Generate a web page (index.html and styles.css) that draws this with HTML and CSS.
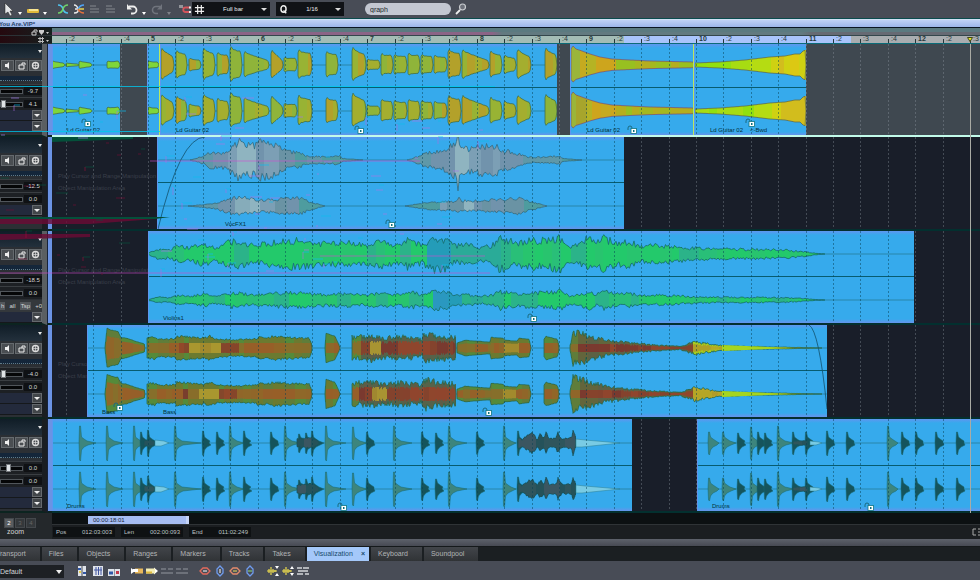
FILE: index.html
```html
<!DOCTYPE html>
<html lang="en">
<head>
<meta charset="utf-8">
<title>You Are.VIP*</title>
<link rel="stylesheet" href="styles.css">
</head>
<body>
<header class="toolbar">
  <div class="group">
    <button class="tool wide" aria-label="Pointer"><svg viewBox="0 0 16 16"><path d="M5 2v11l3-2 2 4 2-1-2-4h3z" fill="#e4e6e8" stroke="#222" stroke-width=".5"/></svg></button>
    <button class="drop" aria-label="Pointer modes"></button>
    <button class="tool wide" aria-label="Draw"><svg viewBox="0 0 16 16"><rect x="2" y="8" width="12" height="4" rx="1" fill="#e0b83a"/><path d="M4 9h9" stroke="#fff3b0" stroke-width="1.5"/></svg></button>
    <button class="drop" aria-label="Draw modes"></button>
  </div>
  <div class="group spaced">
    <button class="tool" aria-label="Crossfade"><svg viewBox="0 0 12 12"><path d="M1 2q4 0 5 4t5 4" stroke="#4fc3ee" stroke-width="1.6" fill="none"/><path d="M1 10q4 0 5-4t5-4" stroke="#6fd26a" stroke-width="1.6" fill="none"/></svg></button>
    <button class="tool" aria-label="Crossfade editor"><svg viewBox="0 0 12 12"><path d="M1 2q3 0 4 4t-4 4M2 6h3" stroke="#e8e8e8" stroke-width="1.5" fill="none"/><path d="M5 6q2-4 6-4" stroke="#4fa3f5" stroke-width="1.6" fill="none"/><path d="M5 6q2 4 6 4" stroke="#e3703c" stroke-width="1.6" fill="none"/><path d="M6 6h5" stroke="#e9d552" stroke-width="1.5"/></svg></button>
    <button class="tool dim" aria-label="Align left"><svg viewBox="0 0 12 12"><path d="M1 3h6M1 6h9M1 9h9" stroke="#8b8f97" stroke-width="1.6"/></svg></button>
    <button class="tool dim" aria-label="Align right"><svg viewBox="0 0 12 12"><path d="M1 3h6M1 6h9M1 9h9" stroke="#8b8f97" stroke-width="1.6"/></svg></button>
  </div>
  <div class="group spaced">
    <button class="tool" aria-label="Undo"><svg viewBox="0 0 12 12"><path d="M3 3.500h4a3.500 3.500 0 0 1 0 7H5" stroke="#eee" stroke-width="1.800" fill="none"/><path d="M1 1v5.500h5z" fill="#eee"/></svg></button>
    <button class="drop" aria-label="Undo history"></button>
    <button class="tool dim" aria-label="Redo"><svg viewBox="0 0 12 12"><path d="M9 3.500H5a3.500 3.500 0 0 0 0 7h2" stroke="#8b8f97" stroke-width="1.600" fill="none"/><path d="M11 1v5.500H6z" fill="#8b8f97"/></svg></button>
    <button class="drop dim" aria-label="Redo history"></button>
  </div>
  <div class="group snap">
    <button class="tool" aria-label="Snap"><svg viewBox="0 0 12 12"><path d="M11 4.500H6.500a2 2 0 0 0 0 4.500H11" stroke="#d2545c" stroke-width="1.800" fill="none"/><path d="M10 4.500h2M10 9h2" stroke="#eee" stroke-width="1.800"/><path d="M1 2v3M3 2v3" stroke="#ddd"/></svg></button>
  </div>
  <div class="pick"><label for="grid"><svg viewBox="0 0 12 12"><path d="M4 1v10M8 1v10M1 4h10M1 8h10" stroke="#eee" stroke-width="1.300"/></svg></label>
    <select id="grid" aria-label="Grid"><option>Full bar</option></select></div>
  <div class="pick quant"><label for="quant"><svg viewBox="0 0 12 12"><ellipse cx="6" cy="5.500" rx="2.800" ry="3.500" fill="none" stroke="#eee" stroke-width="1.600"/><path d="M6 7l3 3" stroke="#eee" stroke-width="1.500"/></svg></label>
    <select id="quant" aria-label="Quantize"><option>1/16</option></select></div>
  <input class="search" type="search" value="graph" aria-label="Search">
  <button class="tool find" aria-label="Find"><svg viewBox="0 0 12 12"><path d="M1 11l4-4" stroke="#eee" stroke-width="1.800"/><circle cx="7.500" cy="4" r="3" fill="#6d717a" stroke="#c9ccd0" stroke-width="1.200"/></svg></button>
</header>

<h1 class="title">You Are.VIP*</h1>

<section class="ruler">
  <div class="corner">
    <div class="corner-row"><svg viewBox="0 0 18 8"><path d="M1 4h4v3H1zM3 4V2h3v2" fill="none" stroke="#ccc"/><path d="M8 2h5v2l-2.500 3L8 4z" fill="#ccc"/><path d="M15 4h3l-1.500 2z" fill="#ccc"/></svg></div>
    <div class="corner-row"><svg viewBox="0 0 18 8"><path d="M9 1v6M11.500 1v6M7 2.500h6M7 5.500h6" stroke="#bbb"/><path d="M15 4h3l-1.500 2z" fill="#ccc"/></svg></div>
  </div>
  <div class="scale">
    <div class="markers"></div>
    <div class="beats" id="beats"></div>
  </div>
</section>

<main class="tracks" id="tracks"></main>

<section class="status">
  <div class="zoom">
    <div class="zoom-set"><button class="on">2</button><button>3</button><button>4</button></div>
    <span>zoom</span>
  </div>
  <div class="status-main">
    <div class="scroll" id="scroll"></div>
    <div class="readout">
      <dl class="times">
        <div><dt>Pos</dt><dd>012:03:003</dd></div>
        <div><dt>Len</dt><dd>002:00:093</dd></div>
        <div><dt>End</dt><dd>011:02:249</dd></div>
      </dl>
      <svg class="corner-icon" viewBox="0 0 8 8"><path d="M4 1H1v6h3M6 1h2M6 7h2M6 4h2" fill="none" stroke="#aaa"/></svg>
    </div>
  </div>
</section>

<div class="splitter"></div>

<nav class="tabs">
  <a href="#transport">Transport</a><a href="#files">Files</a><a href="#objects">Objects</a><a href="#ranges">Ranges</a><a href="#markers">Markers</a><a href="#tracks">Tracks</a><a href="#takes">Takes</a><a href="#vis" class="active">Visualization<b>×</b></a><a href="#keyboard">Keyboard</a><a href="#soundpool">Soundpool</a>
</nav>

<footer class="toolbar bottom">
  <div class="preset"><select aria-label="Preset"><option>Default</option></select></div>
  <div class="group">
    <button class="tool" aria-label="Split view"><svg viewBox="0 0 12 12"><rect x="2" y="1" width="3.500" height="10" fill="#dfe3ea"/><rect x="6.500" y="1" width="3.500" height="10" fill="#dfe3ea"/><path d="M2 4h3M7 8h3" stroke="#3158a8" stroke-width="2"/><path d="M3 7h2" stroke="#e8cf4a" stroke-width="2"/></svg></button>
    <button class="tool" aria-label="Grid view"><svg viewBox="0 0 12 12"><rect x="1.500" y="1.500" width="9" height="9" fill="#dfe3ea" stroke="#dfe3ea"/><path d="M4 2v8M6.500 2v8M9 2v8M2 5h8" stroke="#4154a0"/></svg></button>
    <button class="tool" aria-label="Paired view"><svg viewBox="0 0 12 12"><rect x="0" y="4" width="6" height="7" fill="#dfe3ea"/><rect x="6.500" y="4" width="5.500" height="7" fill="#dfe3ea"/><path d="M1 8h4" stroke="#3158a8" stroke-width="3"/><path d="M8 7.500h3" stroke="#c4384b" stroke-width="3"/></svg></button>
  </div>
  <div class="group spaced">
    <button class="tool" aria-label="Move start"><svg viewBox="0 0 12 12"><path d="M0 3l4 3-4 3z" fill="#fff"/><rect x="4" y="3.500" width="8" height="5" fill="#e8b75a"/><path d="M2 5.500h5" stroke="#fff" stroke-width="3"/></svg></button>
    <button class="tool" aria-label="Move end"><svg viewBox="0 0 12 12"><path d="M8 2.500l4 3.500-4 3.500z" fill="#fff"/><rect x="0" y="3.500" width="9" height="5" fill="#f3edb5"/><path d="M0 7.500h6" stroke="#e0b83a" stroke-width="2"/></svg></button>
    <button class="tool dim" aria-label="Trim"><svg viewBox="0 0 12 12"><path d="M0 4h5M7 4h5M0 8h12" stroke="#868a92" stroke-width="2"/></svg></button>
    <button class="tool dim" aria-label="Extend"><svg viewBox="0 0 12 12"><path d="M0 4h5M7 4h5M0 8h12" stroke="#868a92" stroke-width="2"/></svg></button>
  </div>
  <div class="group spaced">
    <button class="tool" aria-label="Zoom out horizontally"><svg viewBox="0 0 12 12"><path d="M1 6l3-3h4l3 3-3 3H4z" fill="none" stroke="#e36a5c" stroke-width="1.300"/><path d="M4 6h4" stroke="#fff"/></svg></button>
    <button class="tool" aria-label="Zoom in vertically"><svg viewBox="0 0 12 12"><path d="M6 1l3 3v4l-3 3-3-3V4z" fill="none" stroke="#6f9cf0" stroke-width="1.300"/><path d="M6 4v4" stroke="#fff"/></svg></button>
    <button class="tool" aria-label="Zoom in horizontally"><svg viewBox="0 0 12 12"><path d="M1 6l3-3h4l3 3-3 3H4z" fill="none" stroke="#e38a6c" stroke-width="1.300"/><path d="M4 6h4" stroke="#f1dc5a"/></svg></button>
    <button class="tool" aria-label="Zoom out vertically"><svg viewBox="0 0 12 12"><path d="M6 1l3 3v4l-3 3-3-3V4z" fill="none" stroke="#6f9cf0" stroke-width="1.300"/><path d="M4 6h4" stroke="#8fe07a"/></svg></button>
  </div>
  <div class="group spaced">
    <button class="tool" aria-label="Wave zoom in"><svg viewBox="0 0 12 12"><path d="M0 6h10M2 4v4M4 2v8M6 4v4M8 5v2" stroke="#ead94e" stroke-width="1.200"/><path d="M8 1h4l-2 3zM8 11h4l-2-3z" fill="#fff"/></svg></button>
    <button class="tool" aria-label="Wave zoom out"><svg viewBox="0 0 12 12"><path d="M0 6h10M2 4v4M4 2v8M6 4v4M8 5v2" stroke="#ead94e" stroke-width="1.200"/><path d="M8 4h4l-2-3zM8 8h4l-2 3z" fill="#fff"/></svg></button>
    <button class="tool" aria-label="Lines"><svg viewBox="0 0 12 12"><path d="M0 3h5M6 3h6M1 6h10M0 9h6M8 9h4" stroke="#d4d6da" stroke-width="1.300"/></svg></button>
  </div>
</footer>
<script src="app.js"></script>
</body>
</html>
```

FILE: styles.css
```css
* { box-sizing: border-box; }
body {
  margin: 0;
  min-height: 100vh;
  overflow: hidden;
  display: flex;
  flex-direction: column;
  background: #484c56;
  color: #d4d6d8;
  font: 6px/8px "Liberation Sans", Arial, sans-serif;
}
button, select, input { font: inherit; color: inherit; margin: 0; padding: 0; border: 0; background: none; }
select { appearance: none; }
svg { display: block; }

.toolbar { display: flex; align-items: center; height: 19px; background: #484c56; border-bottom: 1px solid #0b4b4c; }
.group { display: flex; align-items: center; gap: 4px; }
.group.spaced { margin-left: 9px; }
.group.snap { margin-left: 7px; }
.toolbar > .group:first-child { gap: 2px; }
.tool { width: 12px; height: 12px; flex: none; }
.tool svg { width: 100%; height: 100%; }
.tool.wide { width: 16px; height: 16px; }
.tool.dim { opacity: .6; }
.drop { width: 5px; height: 12px; display: flex; align-items: flex-end; }
.drop::after { content: ""; border: 2px solid transparent; border-top: 3px solid #fff; border-bottom: 0; }
.drop.dim { opacity: .3; }
.pick { position: relative; display: flex; align-items: center; width: 78px; height: 14px; margin-left: 1px; background: #101216; color: #eee; }
.pick.quant { width: 68px; margin-left: 6px; }
.pick label svg { width: 11px; height: 11px; margin-left: 2px; }
.pick select { flex: 1; height: 100%; text-align: center; text-align-last: center; }
.pick::after { content: ""; margin-right: 3px; border: 3px solid transparent; border-top: 3px solid #ddd; border-bottom: 0; }
.search { appearance: none; width: 86px; height: 12px; margin-left: 21px; padding: 0 5px; border-radius: 6px; background: #c3c7d1; color: #20242a; font-size: 7px; }
.find { margin-left: 4px; }

.title { margin: 0; height: 8px; font: bold 6px/8px "Liberation Sans", Arial, sans-serif; color: #26406a; background: linear-gradient(#c0d2f6, #9db6ea); border-top: 1px solid #cfe0f4; text-indent: -1px; }

.ruler { display: flex; height: 17px; border-top: 1px solid #0a1622; }
.corner { width: 52px; flex: none; background: #14181c; }
.corner-row { height: 8px; display: flex; justify-content: flex-end; padding-right: 3px; border-bottom: 1px solid #2b3236; background: linear-gradient(90deg, #25090f, #16201f); }
.corner-row svg { width: 18px; height: 8px; }
.scale { flex: 1; min-width: 0; overflow: hidden; }
.markers { height: 7px; background: linear-gradient(90deg, #8b6486 0 440px, #627a80 450px 750px, #666a73 760px); border-top: 4px solid #5b7a80; }
.beats { position: relative; height: 9px; overflow: hidden; background: linear-gradient(90deg, #a3bcb5 0 572px, #a9c4fb 572px 799px, #a9adb0 799px); border-top: 1px solid #34474c; border-bottom: 1px solid #0b6c78; }
.beat { position: absolute; bottom: 0; height: 8px; padding-left: 3px; font-size: 7px; line-height: 8px; color: #26383a; }
.beat::before { content: ""; position: absolute; left: 0; bottom: 0; height: 4px; border-left: 1px solid #27363a; }
.beat.bar { font-weight: bold; }
.cursor-head { position: absolute; bottom: 1px; width: 6px; height: 5px; }

.tracks { position: relative; overflow: hidden; }
.track { display: flex; height: 94px; }
.track.selected { height: 93px; }
.panel { width: 47px; flex: none; overflow: hidden; background: #2b2f34; border-right: 5px solid #1a1e22; border-bottom: 2px solid #0c2420; }
.panel.lit { border-right-color: #5a5f62; }
.panel-head { height: 16px; display: flex; align-items: center; justify-content: flex-end; background: linear-gradient(#101d27, #23303c); }
.selected .panel-head { height: 14px; }
.panel-head::after { content: ""; border: 2px solid transparent; border-top: 3px solid #e8e8e8; border-bottom: 0; }
.keys { display: flex; gap: 1px; height: 14px; align-items: center; justify-content: flex-end; }
.key { width: 13px; height: 11px; flex: none; background: #4a4e52; border: 1px solid #656a6e; }
.key svg { width: 11px; height: 9px; }
.meter { height: 12px; padding-top: 4px; }
.meter i { display: block; height: 5px; background: #14263a; border-bottom: 1px dotted #5f7a88; }
.fader { height: 13px; display: flex; align-items: center; background: #1d2024; border-top: 1px solid #3a3e42; }
.fader input { appearance: none; width: 23px; height: 5px; flex: none; background: #050607; border: 1px solid #50555a; }
.fader input::-webkit-slider-thumb { appearance: none; width: 5px; height: 8px; background: #dfe3e6; border: 1px solid #74787c; }
.fader input.rest::-webkit-slider-thumb { opacity: 0; }
.fader output { flex: 1; text-align: center; background: #0f1114; margin-left: 1px; }
.slot { height: 11px; display: flex; align-items: center; border-bottom: 1px solid #15181b; background: #232a3c; }
.slot select { flex: 1; min-width: 0; height: 100%; }
.slot span { width: 10px; height: 10px; padding: 3px 1px; background: #42464a; border: 1px solid #65696d; }
.slot span::after { content: ""; display: block; width: 0; border: 3px solid transparent; border-top: 3px solid #eee; border-bottom: 0; }
.mini { display: flex; justify-content: space-between; height: 12px; align-items: center; background: #34383c; margin-top: 1px; }
.mini b { font-weight: normal; background: #54585c; padding: 0 1px; }
.rail { width: 5px; flex: none; background: #6b93e4; border-left: 1px solid #152238; border-bottom: 2px solid #0c2420; }
.lane { position: relative; flex: 1; min-width: 0; overflow: hidden; background: #191e29; border-bottom: 2px solid #03302f; }
.selected .lane { background: #3f4850; border-bottom-color: #c2fbea; }
.hint { position: absolute; left: 6px; top: 33px; font-size: 6px; line-height: 12px; white-space: pre; color: #3a3f4a; }
.grid, .wave { position: absolute; left: 0; top: 0; width: 100%; height: 100%; }
.clip { position: absolute; top: 0; bottom: 0; overflow: hidden; background: linear-gradient(#5f96f0, #36aaec 4px 88px, #6793ec); border-left: 1px solid #5f96ee; }
.clip-name { position: absolute; bottom: 1px; white-space: pre; color: #05303a; }
.lock { position: absolute; width: 10px; height: 9px; }
.glitch { position: absolute; left: 0; top: 0; width: 500px; height: 280px; pointer-events: none; }
.playhead { position: absolute; top: 0; bottom: 0; width: 1px; background: #a9aba4; }

.status { display: flex; height: 26px; background: #1b1e21; }
.zoom { width: 52px; flex: none; padding-top: 5px; background: #24282b; }
.zoom-set { display: flex; gap: 1px; padding-left: 4px; }
.zoom-set button { width: 10px; height: 10px; background: #34383b; border: 1px solid #44484c; color: #666; }
.zoom-set .on { background: #595d60; color: #fff; }
.zoom span { padding-left: 7px; font-size: 7px; }
.status-main { flex: 1; min-width: 0; }
.scroll { position: relative; height: 12px; background: #0c1012; border-bottom: 1px solid #2f3336; }
.thumb { position: absolute; top: 3px; height: 8px; line-height: 8px; padding-left: 5px; background: #a6bdf2; border-right: 3px solid #c5d4f7; color: #18243c; }
.readout { display: flex; align-items: center; padding: 2px 0; }
.times { display: flex; gap: 6px; margin: 0; padding: 0 1px; }
.times > div { display: flex; justify-content: space-between; width: 62px; padding: 1px 3px; background: #0e1113; color: #bfc2c4; }
.times dd { margin: 0; }
.corner-icon { width: 8px; height: 8px; margin-left: auto; }
.splitter { height: 8px; background: linear-gradient(#5d616b, #474a53); border-bottom: 1px solid #15191b; }

.tabs { display: flex; gap: 2px; height: 14px; background: #1b1f22; }
.tabs a { padding: 0 14px 0 7px; line-height: 14px; font-size: 7px; color: #b2b4b6; text-decoration: none; background: linear-gradient(#42454a, #303336); }
.tabs a:first-child { margin-left: -11px; }
.tabs .active { padding-right: 4px; background: #a4c8fa; color: #164a6c; }
.tabs b { margin-left: 8px; }
.bottom { border: 0; flex: 1; align-items: flex-start; padding-top: 4px; }
.preset { display: flex; align-items: center; width: 64px; height: 13px; margin-right: 12px; background: #1d2024; font-size: 7px; }
.preset select { flex: 1; min-width: 0; height: 100%; }
.preset::after { content: ""; margin-right: 2px; border: 3px solid transparent; border-top: 4px solid #eee; border-bottom: 0; }
.bottom .group { gap: 3px; }
.bottom .preset + .group { gap: 4px; }
.bottom .spaced { margin-left: 11px; }
```

FILE: app.js
```js
// Timeline coordinates are window pixels; ORIGIN is where the lanes begin.
const ORIGIN = 52, BEAT = 27.4, BAR5 = 148, LOCATOR = 970;
const WIDTH = document.documentElement.clientWidth;
let seed = 7;
const rnd = () => (seed = (seed * 16807) % 2147483647) / 2147483647;
const NS = "http://www.w3.org/2000/svg";
function el(tag, cls, parent, text) {
  const n = document.createElement(tag);
  if (cls) n.className = cls;
  if (text) n.textContent = text;
  parent.append(n);
  return n;
}
function svg(cls, parent, body) {
  const n = document.createElementNS(NS, "svg");
  n.setAttribute("class", cls);
  n.innerHTML = body;
  parent.append(n);
  return n;
}
function grid(left, color) {
  let s = "";
  for (let i = -3; BAR5 + i * BEAT < WIDTH; i++) {
    const x = Math.round(BAR5 + i * BEAT) - left + 0.5;
    s += `<path d="M${x} 0V94" stroke="${color}" stroke-dasharray="2 2"/>`;
  }
  return s;
}
// Height at x from a flat list of x,height pairs.
function level(p, x) {
  for (let i = 0; i < p.length - 2; i += 2)
    if (x >= p[i] && x <= p[i + 2])
      return p[i + 1] + (p[i + 3] - p[i + 1]) * (x - p[i]) / (p[i + 2] - p[i] || 1);
  return 0;
}
// Draws a filled, colour-banded envelope around the line y.
function wave(p, y, left, o) {
  const up = [], down = [], bands = {}, cores = {};
  const end = p[p.length - 2];
  let run = 0, c = "", core = "";
  const step = o.step || 1;
  const at = (x) => {
    const h = level(p, x) * (o.scale || 1), n = o.noise || 0;
    return [h * (1 - n * rnd()), h * (1 - n * rnd()) * (o.low || 1)];
  };
  let prev = at(p[0]);
  for (let x = p[0]; x < end; x += step) {
    const nx = Math.min(end, x + step), cur = at(nx);
    if (run-- <= 0) {
      run = 3 + rnd() * 7;
      const list = o.by ? o.by(x) : o.colors;
      c = list[Math.floor(rnd() * list.length)];
      if (o.coreBy) {
        const cl = o.coreBy(x);
        core = cl[Math.floor(rnd() * cl.length)];
      }
    }
    const a = x - left, b = nx - left;
    bands[c] = (bands[c] || "") + `M${a} ${y - prev[0]}L${b} ${y - cur[0]}V${y + cur[1]}L${a} ${y + prev[1]}z`;
    if (o.core) {
      const k = Math.min(o.core, prev[0] * .6);
      cores[core] = (cores[core] || "") + `M${a} ${y - k}H${b}V${y + k}H${a}z`;
    }
    up.push(`${a} ${(y - prev[0]).toFixed(1)}`);
    down.unshift(`${a} ${(y + prev[1]).toFixed(1)}`);
    prev = cur;
  }
  let s = "";
  for (const k in bands) s += `<path d="${bands[k]}" fill="${k}" shape-rendering="crispEdges"/>`;
  for (const k in cores) s += `<path d="${cores[k]}" fill="${k}" opacity=".9"/>`;
  return s + `<path d="M${up.join("L")}L${end - left} ${y}L${down.join("L")}z" fill="none" stroke="${o.line || "#21715f"}" stroke-width=".8"/>`;
}

// Plucks: start, end, attack height, release height.
const plucks = [52,65,4,2, 66,79,2,1, 79,92,4,2, 107,120,4,4, 148,159,4,3,
  161,174,17,9, 176,187,15,11, 189,201,7,5, 203,215,17,12, 217,229,13,10, 230,242,19,14,
  244,269,14,5, 271,283,15,6, 284,297,8,7, 298,312,16,12, 326,338,14,11, 352,366,18,11,
  367,380,6,5, 381,393,12,10, 394,407,11,9, 408,420,12,10, 421,433,11,9, 434,447,10,8,
  448,461,16,12, 462,489,16,5, 490,502,14,10, 504,516,10,7, 517,531,16,9, 545,557,17,11];
const lime = ["#8fb43a", "#a4ae2f", "#98b334", "#b3a12a"];
function guitar(y, left) {
  let s = "";
  for (let i = 0; i < plucks.length; i += 4) {
    const [a, b, h, k] = plucks.slice(i, i + 4);
    s += wave([a, h * .8, a + 1, h, a + 3, h * .85, (a + b) / 2 + 1, (h * .8 + k) / 2, b - 2, k, b, k * .5], y, left,
      { colors: a < 150 ? ["#7fd63a"] : lime, low: .88, noise: .06, line: "#43704a" });
  }
  s += wave([571, 16, 573, 19, 576, 16, 582, 14, 590, 11, 600, 8, 612, 6, 630, 5, 650, 4, 694, 3], y, left,
    { by: x => x < 578 ? ["#9ab53a", "#a7a52c"] : x < 590 ? ["#b5b324", "#c5aa20"] : x < 615 ? ["#cda51d", "#c5aa20"] : ["#a5b81e", "#b5ae1e", "#98c020"], line: "#7c5a70", low: .9 });
  s += wave([695, 2, 720, 3, 745, 5, 770, 8, 785, 9, 795, 11, 800, 11, 803, 14, 806, 15], y, left,
    { by: x => x < 750 ? ["#92e00f", "#a7dc12"] : x < 770 ? ["#b5dc12", "#cfd112"] : ["#cfd112", "#dcc813", "#d2bd1d"], line: "#63704d" });
  return s;
}
const voc1 = [190,0,205,5,210,10,222,9,228,13,232,17,238,22,240,26,243,18,258,19,260,23,270,20,280,17,288,10,300,9,306,5,318,4,340,5,342,2,363,0];
const voc2 = [407,0,420,5,430,10,440,10,448,14,451,22,455,18,457,19,458,31,460,19,463,21,468,14,480,17,498,18,502,12,515,9,525,5,533,3,560,5,562,2,582,0];
const voc3 = [188,0,205,2,218,4,230,9,240,11,258,7,285,9,300,10,310,5,325,0];
const voc4 = [405,0,430,5,445,5,457,6,458,13,460,7,470,6,500,8,520,9,535,4,547,0];
function vocals(y, left, i) {
  const loud = x => (x > 207 && x < 290) || (x > 428 && x < 515);
  const o = { noise: .42, step: 1.5, line: "#356b7e",
    by: x => !loud(x) ? ["#4e9c9f", "#5f98a8"] : (x > 230 && x < 255) || (x > 448 && x < 468) ? ["#8fb4c0", "#86acba"] : ["#7c9fb5", "#7193ac", "#6a93a4"] };
  return wave(i ? voc3 : voc1, y, left, o) + wave(i ? voc4 : voc2, y, left, o);
}
const strings = [148,1,160,7,168,5,178,10,190,8,203,14,215,8,232,16,240,16,250,11,265,13,280,16,300,17,320,13,345,15,365,11,381,17,395,12,411,18,422,12,435,20,448,18,455,10,466,13,480,8,492,11,499,20,518,14,530,17,550,17,560,21,570,9,580,12,588,21,596,13,604,20,615,14,630,15,642,10,660,11,680,9,700,7,730,6,755,6,785,5,805,3,815,1,825,0];
function violins(y, left, i) {
  return wave(strings, y, left, { noise: .48, step: 1.5, scale: i ? .55 : 1, line: "#146c66",
    by: x => x > 425 && x < 450 ? ["#249cb8", "#2a98c0"] : x > 450 && x < 490 || x < 165 ? ["#2bb389", "#2aab98"] : ["#23c96b", "#28c46e", "#2bb389", "#29bf78", "#23c96b"] });
}
const bassParts = [
  [105,1,107,20,112,18,118,17,121,11,127,10,135,7,145,4],
  [147,11,155,12,158,10,175,10,177,13,205,11,210,13,216,10,235,9,256,10,258,12,270,11,272,13,285,12,300,11,309,11,312,4],
  [325,1,326,15,335,12,340,1], [352,13,370,15,385,12,400,14,422,11,424,18,440,14,456,13],
  [457,5,465,8,477,7,490,6,491,11,503,10,505,8,517,7,519,10,529,9,531,1], [544,9,546,12,557,9,559,4],
  [570,3,573,20,590,15,605,10,625,7,650,4,680,2,690,6,695,8,720,3,745,2,785,1,822,0]];
const red = ["#8a3f2a", "#96432a", "#7d352c"], brown = ["#966428", "#9c5c28", "#8c6c2a"], gold = ["#a88c2e", "#b09a30"];
function bass(y, left) {
  return bassParts.map((p, n) => wave(p, y, left, {
    noise: n === 3 || n === 6 ? .42 : n === 1 ? .2 : .05, core: n === 6 ? 4 : n === 3 ? 7 : n === 0 ? 13 : 5,
    by: x => x > 692 ? ["#b8a72a", "#a5cf20"] : x > 352 && x < 456 ? ["#56634a", "#5d5d48"] : x > 572 ? ["#5d6145", "#63653c"] : ["#5f7d3a", "#6b7a30", "#558a3a"],
    coreBy: x => x > 692 ? ["#b09a28", "#b5a626"] : x > 571 ? red : (x > 365 && x < 380) || (x > 188 && x < 212) || (x > 500 && x < 512) ? gold :
      (x > 352 && x < 456) || (x > 175 && x < 188) || (x > 212 && x < 236) ? red : brown,
    line: "#2a6b4e" })).join("") + `<path d="M${722 - left} ${y - 3}L${792 - left} ${y}L${722 - left} ${y + 3}z" fill="#a5d51f"/>`;
}
// Hits: position, height, tail length.
const hits = [80,17,16, 107,17,16, 134,17,10, 141,11,8, 148,13,10, 175,17,26, 203,12,6, 217,11,6, 230,17,14, 244,12,5, 271,11,7, 285,17,16,
  299,9,5, 306,10,6, 312,12,12, 326,17,20, 353,16,14, 367,11,7, 394,17,18, 422,11,6, 436,10,6, 449,17,18, 477,11,6, 504,17,12, 518,12,6,
  709,11,10, 723,11,13, 738,10,6, 751,16,8, 758,11,6, 765,10,6, 778,17,16, 793,11,8, 806,11,8, 827,12,7, 847,11,7, 888,17,10, 902,11,7, 916,11,7, 936,11,7, 957,11,7];
function drums(y, left) {
  let s = "";
  for (let i = 0; i < hits.length; i += 3) {
    const [x, h, t] = hits.slice(i, i + 3), soft = h > 14 || x === 709 || x === 723, a = x - left;
    const f = soft ? "#3d857d" : "#15545c";
    s += `<path d="M${a - 1} ${y - 1}L${a - .5} ${y - h}L${a + .5} ${y - h}L${a + 1.5} ${y - 6}L${a + 4} ${y - 4}L${a + 7} ${y - 2}L${a + t} ${y}L${a + 8} ${y + 2}L${a + 4} ${y + 4}L${a + 1.5} ${y + 7}L${a + .5} ${y + h + 1}L${a - .5} ${y + h}z" fill="${f}" stroke="#17666c" stroke-width=".5"/>`;
  }
  const dark = { colors: ["#2f555c", "#3b5661", "#25525a"], noise: .35, line: "#15545c" };
  s += wave([144, 3, 150, 4, 155, 2], y, left, dark) + wave([297, 5, 312, 6, 319, 2], y, left, dark) + wave([793, 2, 808, 3], y, left, dark);
  s += wave([518,7,522,4,532,12,537,5,540,10,544,6,546,13,549,5,556,6,558,12,562,5,571,6,573,13,576,6], y, left, dark);
  for (const [x, t, h] of [[576, 44, 4], [155, 14, 3], [810, 12, 2]])
    s += `<path d="M${x - left} ${y - h}L${x + 9 - left} ${y - h + 1}L${x + t - left} ${y}L${x + 6 - left} ${y + h}L${x - left} ${y + h}z" fill="#79cbe4" stroke="#2a7f92" stroke-width=".5"/>`;
  return s;
}

const tracks = [
  { values: ["-9.7", "4.1"], slots: 2, lit: 1, selected: 1, mid: [21, 67], draw: guitar, clips: [
    { from: 52, to: 120, names: [[67, "Ld Guitar 02"]], lock: [87, 78] }, { from: 147, to: 160, names: [], edge: 1 },
    { from: 160, to: 557, names: [[176, "Ld Guitar 02"]], lock: [360, 85] },
    { from: 570, to: 694, names: [[587, "Ld Guitar 02"]], lock: [633, 85], edge: 1 },
    { from: 694, to: 806, names: [[710, "Ld Guitar 02"], [750, "<-Bwd"]], lock: [751, 78] }] },
  { values: ["-12.5", "0.0"], slots: 1, mid: [23, 69], draw: vocals, clips: [
    { from: 157, to: 624, names: [[225, "VocFX1"]], lock: [391, 86], fade: "M0 92Q22 0 47 0" }] },
  { values: ["-18.5", "0.0"], slots: 1, lit: 1, mini: 1, mid: [23, 69], draw: violins, clips: [
    { from: 148, to: 914, names: [[163, "Violins1"]], lock: [533, 86] }] },
  { values: ["-4.0", "0.0"], slots: 2, mid: [23, 69], draw: bass, clips: [
    { from: 87, to: 827, names: [[102, "Bass"], [163, "Bass"]], lock: [119, 81], lock2: [488, 86], fade: "M721 0Q731 5 739 84" }] },
  { values: ["0.0", "0.0"], slots: 2, mid: [24, 70], draw: drums, clips: [
    { from: 52, to: 632, names: [[67, "Drums"]], lock: [343, 87] },
    { from: 697, to: 1400, names: [[712, "Drums"]], lock: [870, 87] }] }];
// Visible fader knobs, keyed by track and row.
const knobs = { "0-1": 0, "3-0": 0, "4-0": 30 };
const keyIcons = [
  ["Mute", '<path d="M3 3h2l2-2v7L5 6H3z" fill="#eee"/>'],
  ["Lock", '<path d="M3 4h5v4H3zM6 4V2h3v2" fill="none" stroke="#eee"/>'],
  ["Settings", '<circle cx="5.500" cy="4.500" r="3" fill="none" stroke="#ddd" stroke-width="1.400"/><path d="M5.500 1v7M2 4.500h7" stroke="#ddd" stroke-width=".7"/>']];
const lockSvg = '<path d="M1 5V3q0-2 2-2t2 2" fill="none" stroke="#1a6b80"/><rect x="4" y="3.500" width="5.500" height="5" fill="#fff" stroke="#0d7480" stroke-width=".8"/><rect x="6" y="5" width="1.500" height="2" fill="#0d7480"/>';

const root = document.getElementById("tracks");
tracks.forEach((t, n) => {
  const row = el("section", "track" + (t.selected ? " selected" : ""), root);
  const panel = el("div", "panel" + (t.lit ? " lit" : ""), row);
  el("div", "panel-head", panel);
  const keys = el("div", "keys", panel);
  keyIcons.forEach(([name, body]) => {
    const b = el("button", "key", keys);
    b.setAttribute("aria-label", name);
    svg("", b, body).setAttribute("viewBox", "0 0 11 9");
  });
  el("i", "", el("div", "meter", panel));
  t.values.forEach((v, i) => {
    const knob = knobs[n + "-" + i], f = el("div", "fader", panel), r = el("input", knob === undefined ? "rest" : "", f);
    r.type = "range";
    r.value = knob || 0;
    r.setAttribute("aria-label", i ? "Pan" : "Volume");
    el("output", "", f, v);
  });
  if (t.mini) el("div", "mini", panel).innerHTML = "<b>h</b><span>all</span><b>Tsp</b><span>+0</span>";
  for (let i = 0; i < t.slots; i++) {
    const slot = el("div", "slot", panel), s = el("select", "", slot);
    s.setAttribute("aria-label", "Slot " + (i + 1));
    el("span", "", slot);
  }
  el("div", "rail", row);
  const lane = el("div", "lane", row);
  svg("grid", lane, grid(ORIGIN, "rgba(150,160,170,.35)"));
  if (n > 0 && n < 4) el("div", "hint", lane, "Play Cursor and Range Manipulation\nObject Manipulation Area");
  t.clips.forEach(c => {
    const box = el("div", "clip", lane), left = c.from + 1;
    box.style.left = c.from - ORIGIN + "px";
    box.style.width = c.to - c.from + "px";
    const [a, b] = t.mid, mid = (a + b) / 2 - .5;
    let s = `<path d="M0 ${a}H1400M0 ${b}H1400" stroke="#23798f" stroke-width=".7"/><path d="M0 ${mid}H1400" stroke="#075c70"/>`;
    s += t.draw(a, left, 0) + t.draw(b, left, 1) + grid(left, "rgba(6,64,84,.5)");
    if (c.fade) s += `<path d="${c.fade}" fill="none" stroke="#12506c" stroke-width=".8"/>`;
    if (c.edge) s += `<path d="M${c.to - left - .5} 0V92" stroke="#b9e860"/>`;
    svg("wave", box, s);
    c.names.forEach(([x, text]) => { el("span", "clip-name", box, text).style.left = x - left + "px"; });
    [c.lock, c.lock2].forEach(k => {
      if (!k) return;
      const i = svg("lock", box, lockSvg);
      i.style.left = k[0] - left - 6 + "px";
      i.style.top = k[1] - 4 + "px";
    });
  });
});

// Interference streaks across the upper tracks.
let g = '<path d="M0 42.500H495M0 87.500H160" stroke="#00c8ee" stroke-width=".8"/><path d="M150 117H420M0 229H490M320 212H485" stroke="#d34bd0" stroke-width=".6"/>' +
  '<path d="M52 93H133V95L52 98z" fill="#04503a"/><path d="M0 173H170L155 175H0z" fill="#04503a"/><path d="M0 175H155L90 180H0zM0 190H90V193L0 196z" fill="#6b0a35" opacity=".8"/>';
for (let i = 0; i < 90; i++) {
  const x = Math.round(rnd() * 480), y = Math.round(50 + rnd() * 180), dark = x < 145 && y > 95;
  g += `<path d="M${x} ${y}h${Math.round(2 + rnd() * 10)}" stroke="${dark ? (i % 2 ? "#6d1034" : "#06503c") : (i % 2 ? "#a07ce8" : "#10bdee")}" stroke-width=".7"/>`;
  if (i % 4 === 0) g += `<path d="M${x} ${y}v${4 + i % 5}" stroke="${dark ? "#a00d3c" : "#b06ce4"}" stroke-width=".6"/>`;
}
svg("glitch", root, g);
el("div", "playhead", root).style.left = LOCATOR + "px";

const beats = document.getElementById("beats");
for (let i = -3; BAR5 + i * BEAT < WIDTH - 8; i++) {
  const k = ((i % 4) + 4) % 4, b = el("span", "beat" + (k ? "" : " bar"), beats, k ? ":" + (k + 1) : String(5 + i / 4));
  b.style.left = Math.round(BAR5 + i * BEAT) - ORIGIN + "px";
}
const head = svg("cursor-head", beats, '<path d="M.5.500h5L3 4.500z" fill="#e8ec20" stroke="#42451a"/>');
head.style.left = LOCATOR - ORIGIN - 3 + "px";
const thumb = el("div", "thumb", document.getElementById("scroll"), "00:00:18:01");
thumb.style.left = 88 - ORIGIN + "px";
thumb.style.width = "101px";
```
